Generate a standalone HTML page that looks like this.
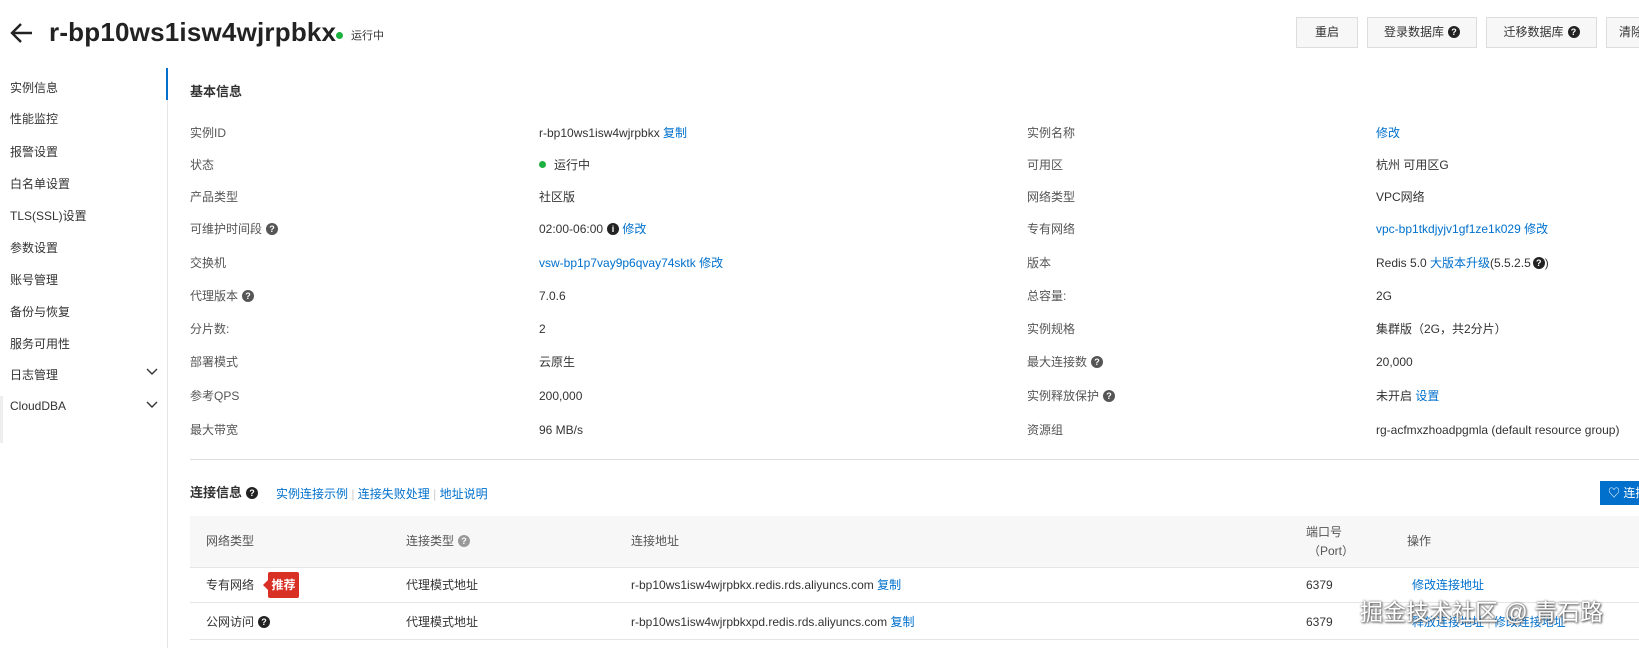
<!DOCTYPE html>
<html><head><meta charset="utf-8"><style>
*{margin:0;padding:0;box-sizing:border-box}
body{width:1639px;height:645px;overflow:hidden;background:#fff;font-family:"Liberation Sans","Noto Sans CJK SC",sans-serif;font-size:12px;color:#333;position:relative}
.a{position:absolute;white-space:nowrap;line-height:16px}
.l{color:#0070cc}
.lab{color:#555}
.q{display:inline-block;width:12px;height:12px;border-radius:50%;background:#444;color:#fff;font-size:9px;font-weight:bold;text-align:center;line-height:12px;vertical-align:middle;margin-left:4px;margin-top:-2px}
.btn{position:absolute;top:17px;height:31px;border:1px solid #ddd;background:#f7f7f7;font-size:12px;line-height:29px;text-align:center;color:#333}
.side{position:absolute;left:10px;font-size:12px;color:#333}
.hl{position:absolute;height:1px;background:#e5e5e5}
</style></head><body>
<svg class="a" style="left:10px;top:22px" width="24" height="22" viewBox="0 0 24 22"><path d="M22 11H3M11 2L2 11l9 9" stroke="#222" stroke-width="2.4" fill="none"/></svg>
<div class="a" style="left:49px;top:16px;font-size:26px;font-weight:bold;color:#222;line-height:32px;letter-spacing:0.2px">r-bp10ws1isw4wjrpbkx</div>
<div class="a" style="left:336px;top:32px;width:7px;height:7px;border-radius:50%;background:#1db23f"></div>
<div class="a" style="left:351px;top:28px;font-size:11px;color:#333">运行中</div>
<div class="btn" style="left:1296px;width:62px">重启</div>
<div class="btn" style="left:1367px;width:110px">登录数据库<span class="q" style="background:#222">?</span></div>
<div class="btn" style="left:1486px;width:111px">迁移数据库<span class="q" style="background:#222">?</span></div>
<div class="btn" style="left:1606px;width:60px;text-align:left;padding-left:12px">清除</div>

<div class="a" style="left:167px;top:68px;width:1px;height:580px;background:#e5e5e5"></div>
<div class="a" style="left:166px;top:68px;width:2px;height:32px;background:#0070cc"></div>
<div class="a" style="left:0;top:396px;width:3px;height:47px;background:#eee"></div>
<div class="side l" style="top:79px">实例信息</div>
<div class="side" style="top:110px">性能监控</div>
<div class="side" style="top:143px">报警设置</div>
<div class="side" style="top:175px">白名单设置</div>
<div class="side" style="top:207px">TLS(SSL)设置</div>
<div class="side" style="top:239px">参数设置</div>
<div class="side" style="top:271px">账号管理</div>
<div class="side" style="top:303px">备份与恢复</div>
<div class="side" style="top:335px">服务可用性</div>
<div class="side" style="top:366px">日志管理</div>
<div class="side" style="top:399px">CloudDBA</div>
<svg class="a" style="left:146px;top:368px" width="12" height="8"><path d="M1 1l5 5 5-5" stroke="#333" stroke-width="1.4" fill="none"/></svg>
<svg class="a" style="left:146px;top:401px" width="12" height="8"><path d="M1 1l5 5 5-5" stroke="#333" stroke-width="1.4" fill="none"/></svg>

<div class="a" style="left:190px;top:84px;font-size:13px;font-weight:bold;color:#333">基本信息</div>

<div class="a lab" style="left:190px;top:125px">实例ID</div>
<div class="a" style="left:539px;top:125px">r-bp10ws1isw4wjrpbkx <span class="l">复制</span></div>
<div class="a lab" style="left:1027px;top:125px">实例名称</div>
<div class="a l" style="left:1376px;top:125px">修改</div>

<div class="a lab" style="left:190px;top:157px">状态</div>
<div class="a" style="left:539px;top:157px"><span style="display:inline-block;width:7px;height:7px;border-radius:50%;background:#1db23f;margin-right:8px;vertical-align:1px"></span>运行中</div>
<div class="a lab" style="left:1027px;top:157px">可用区</div>
<div class="a" style="left:1376px;top:157px">杭州 可用区G</div>

<div class="a lab" style="left:190px;top:189px">产品类型</div>
<div class="a" style="left:539px;top:189px">社区版</div>
<div class="a lab" style="left:1027px;top:189px">网络类型</div>
<div class="a" style="left:1376px;top:189px">VPC网络</div>

<div class="a lab" style="left:190px;top:221px">可维护时间段<span class="q" style="background:#555">?</span></div>
<div class="a" style="left:539px;top:221px">02:00-06:00<span class="q" style="background:#222">i</span> <span class="l">修改</span></div>
<div class="a lab" style="left:1027px;top:221px">专有网络</div>
<div class="a l" style="left:1376px;top:221px">vpc-bp1tkdjyjv1gf1ze1k029 修改</div>

<div class="a lab" style="left:190px;top:255px">交换机</div>
<div class="a l" style="left:539px;top:255px">vsw-bp1p7vay9p6qvay74sktk 修改</div>
<div class="a lab" style="left:1027px;top:255px">版本</div>
<div class="a" style="left:1376px;top:255px">Redis 5.0 <span class="l">大版本升级</span>(5.5.2.5<span class="q" style="background:#222;margin-left:2px">?</span>)</div>

<div class="a lab" style="left:190px;top:288px">代理版本<span class="q" style="background:#555">?</span></div>
<div class="a" style="left:539px;top:288px">7.0.6</div>
<div class="a lab" style="left:1027px;top:288px">总容量:</div>
<div class="a" style="left:1376px;top:288px">2G</div>

<div class="a lab" style="left:190px;top:321px">分片数:</div>
<div class="a" style="left:539px;top:321px">2</div>
<div class="a lab" style="left:1027px;top:321px">实例规格</div>
<div class="a" style="left:1376px;top:321px">集群版（2G，共2分片）</div>

<div class="a lab" style="left:190px;top:354px">部署模式</div>
<div class="a" style="left:539px;top:354px">云原生</div>
<div class="a lab" style="left:1027px;top:354px">最大连接数<span class="q" style="background:#555">?</span></div>
<div class="a" style="left:1376px;top:354px">20,000</div>

<div class="a lab" style="left:190px;top:388px">参考QPS</div>
<div class="a" style="left:539px;top:388px">200,000</div>
<div class="a lab" style="left:1027px;top:388px">实例释放保护<span class="q" style="background:#555">?</span></div>
<div class="a" style="left:1376px;top:388px">未开启 <span class="l">设置</span></div>

<div class="a lab" style="left:190px;top:422px">最大带宽</div>
<div class="a" style="left:539px;top:422px">96 MB/s</div>
<div class="a lab" style="left:1027px;top:422px">资源组</div>
<div class="a" style="left:1376px;top:422px">rg-acfmxzhoadpgmla (default resource group)</div>

<div class="hl" style="left:190px;top:459px;width:1449px;background:#ddd"></div>

<div class="a" style="left:190px;top:485px;font-size:13px;font-weight:bold">连接信息<span class="q" style="background:#222">?</span></div>
<div class="a l" style="left:276px;top:486px">实例连接示例 <span style="color:#ccc">|</span> 连接失败处理 <span style="color:#ccc">|</span> 地址说明</div>
<div class="a" style="left:1600px;top:481px;width:50px;height:24px;background:#0070cc;color:#fff;line-height:24px;padding-left:8px;font-size:12px">♡ 连接</div>

<div class="a" style="left:190px;top:516px;width:1449px;height:51px;background:#f7f7f7"></div>
<div class="a lab" style="left:206px;top:533px">网络类型</div>
<div class="a lab" style="left:406px;top:533px">连接类型<span class="q" style="background:#999">?</span></div>
<div class="a lab" style="left:631px;top:533px">连接地址</div>
<div class="a lab" style="left:1306px;top:524px">端口号</div>
<div class="a lab" style="left:1308px;top:543px">（Port）</div>
<div class="a lab" style="left:1407px;top:533px">操作</div>
<div class="hl" style="left:190px;top:567px;width:1449px"></div>
<div class="hl" style="left:190px;top:602px;width:1449px"></div>
<div class="hl" style="left:190px;top:639px;width:1449px"></div>

<div class="a" style="left:206px;top:577px">专有网络</div>
<div class="a" style="left:268px;top:572px;width:31px;height:26px;background:#d93026;color:#fff;font-weight:bold;text-align:center;line-height:26px;border-radius:2px">推荐</div>
<div class="a" style="left:263px;top:580px;width:0;height:0;border-top:5px solid transparent;border-bottom:5px solid transparent;border-right:5px solid #d93026"></div>
<div class="a" style="left:406px;top:577px">代理模式地址</div>
<div class="a" style="left:631px;top:577px">r-bp10ws1isw4wjrpbkx.redis.rds.aliyuncs.com <span class="l">复制</span></div>
<div class="a" style="left:1306px;top:577px">6379</div>
<div class="a l" style="left:1412px;top:577px">修改连接地址</div>

<div class="a" style="left:206px;top:614px">公网访问<span class="q" style="background:#222">?</span></div>
<div class="a" style="left:406px;top:614px">代理模式地址</div>
<div class="a" style="left:631px;top:614px">r-bp10ws1isw4wjrpbkxpd.redis.rds.aliyuncs.com <span class="l">复制</span></div>
<div class="a" style="left:1306px;top:614px">6379</div>
<div class="a l" style="left:1412px;top:614px">释放连接地址 <span style="color:#ccc">|</span> 修改连接地址</div>
<div class="a" style="left:1360px;top:598px;font-size:23px;line-height:28px;color:#fff;text-shadow:0 0 2px #555,1px 1px 2px #555">掘金技术社区 @ 青石路</div>
</body></html>
